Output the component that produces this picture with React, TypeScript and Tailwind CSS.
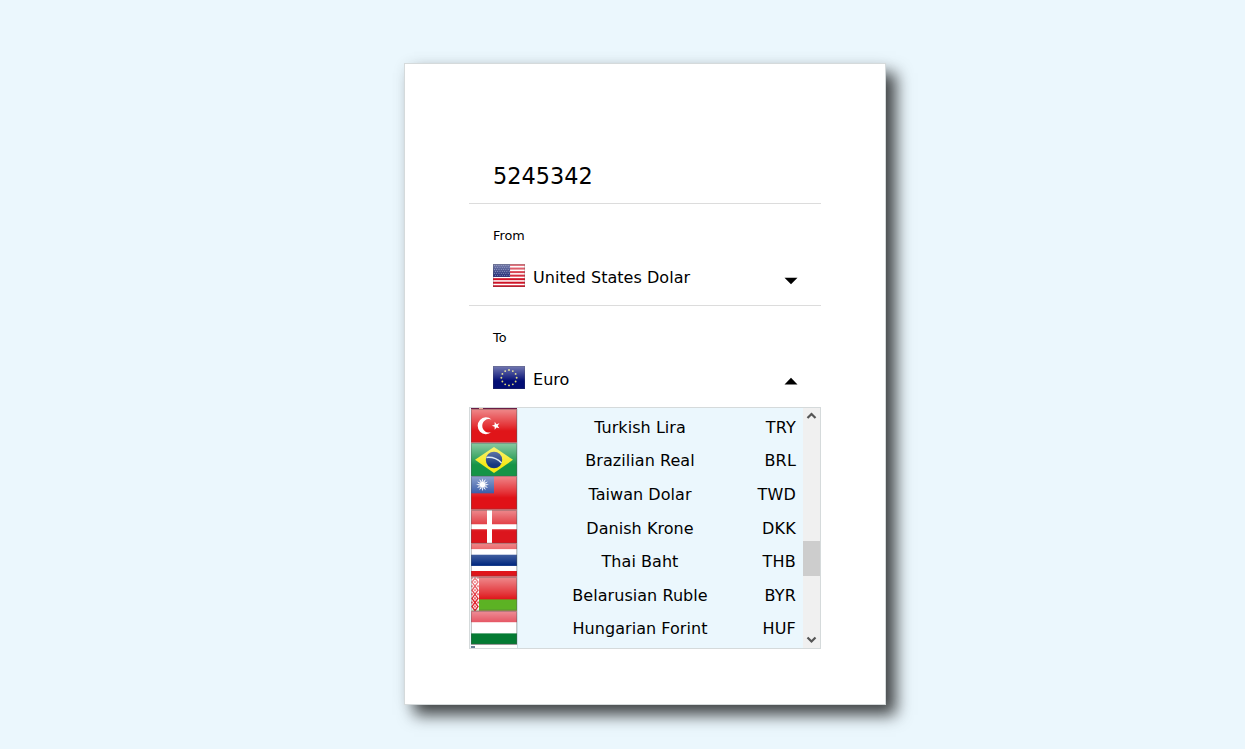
import type { ReactNode } from "react";

type FlagProps = { children: ReactNode; id: string; className: string; gloss?: number };

function Flag({ children, id, className, gloss = 0.5 }: FlagProps) {
  return (
    <svg viewBox="0 0 46 33" preserveAspectRatio="none" className={className}>
      <defs>
        <linearGradient id={id} x1="0" y1="0" x2="0" y2="1">
          <stop offset="0" stopColor="#fff" stopOpacity={gloss} />
          <stop offset="0.5" stopColor="#fff" stopOpacity={gloss * 0.26} />
          <stop offset="0.65" stopColor="#fff" stopOpacity="0" />
        </linearGradient>
      </defs>
      {children}
      <rect width="46" height="33" fill={`url(#${id})`} />
      <rect x="0.5" y="0.5" width="45" height="32" fill="none" stroke="#555" strokeOpacity="0.35" />
    </svg>
  );
}

const ring = Array.from({ length: 12 }, (_, i) => (i * Math.PI) / 6);

function star(cx: number, cy: number, outer: number, inner: number, n: number, turn: number) {
  return Array.from({ length: n * 2 }, (_, i) => {
    const r = i % 2 ? inner : outer;
    const a = turn + (i * Math.PI) / n;
    return `${(cx + r * Math.cos(a)).toFixed(2)},${(cy + r * Math.sin(a)).toFixed(2)}`;
  }).join(" ");
}

const usa = (
  <>
    <rect width="46" height="33" fill="#fff" />
    {[0, 1, 2, 3, 4, 5, 6].map((i) => (
      <rect key={i} y={i * 5.08} width="46" height="2.9" fill="#cf1427" />
    ))}
    <rect width="24.5" height="18.5" fill="#101c6c" />
    {[0, 1, 2, 3, 4, 5].map((r) =>
      [0, 1, 2, 3, 4, 5, 6].map((c) => (
        <circle key={`${r}-${c}`} cx={2 + c * 3.3 + (r % 2) * 1.5} cy={2 + r * 2.9} r="0.65" fill="#a9b0d6" />
      )),
    )}
  </>
);

const europe = (
  <>
    <rect width="46" height="33" fill="#020d74" />
    {ring.map((a) => (
      <circle key={a} cx={23 + 11 * Math.cos(a)} cy={16.8 + 11 * Math.sin(a)} r="1.35" fill="#e2dc79" />
    ))}
  </>
);

const turkey = (
  <>
    <rect width="46" height="33" fill="#e01519" />
    <path d="M20.5 10.3A8.3 8.3 0 1 0 20.5 22.7A6.7 6.7 0 1 1 20.5 10.3Z" fill="#fff" />
    <polygon points={star(25, 16.5, 4.2, 1.7, 5, Math.PI)} fill="#fff" />
  </>
);

const brazil = (
  <>
    <rect width="46" height="33" fill="#159447" />
    <path d="M4 16.5L23 4L42 16.5L23 29.5Z" fill="#f6e918" />
    <circle cx="23" cy="16.7" r="8.2" fill="#16377f" />
    <path d="M15.4 14.2Q24 13.2 30.6 19.6" fill="none" stroke="#dce9f2" strokeWidth="1.4" />
  </>
);

const taiwan = (
  <>
    <rect width="46" height="33" fill="#e01117" />
    <rect width="23" height="17" fill="#20479e" />
    <polygon points={star(11.5, 8.5, 6.4, 3.1, 12, 0)} fill="#fff" />
    <circle cx="11.5" cy="8.5" r="3.3" fill="#fff" stroke="#5b78b9" strokeWidth="0.6" />
  </>
);

const denmark = (
  <>
    <rect width="46" height="33" fill="#dc151d" />
    <path d="M16 0h5v14h25v5H21v14h-5V19H0v-5h16z" fill="#fff" />
  </>
);

const thailand = (
  <>
    <rect width="46" height="33" fill="#fff" />
    <rect width="46" height="6" fill="#df151b" />
    <rect y="11.5" width="46" height="11" fill="#032a80" />
    <rect y="27.5" width="46" height="5.5" fill="#df151b" />
  </>
);

const belarus = (
  <>
    <rect width="46" height="33" fill="#df171c" />
    <rect y="22" width="46" height="11" fill="#5cb224" />
    <rect width="8" height="33" fill="#fff" />
    {[0, 1, 2, 3].map((i) => (
      <path
        key={i}
        d={`M4 ${i * 8 + 1}l3 4-3 4-3-4zM1 ${i * 8}v2M7 ${i * 8}v2M4 ${i * 8 + 4}v2`}
        fill="none"
        stroke="#df2630"
        strokeWidth="1.4"
      />
    ))}
  </>
);

const hungary = (
  <>
    <rect width="46" height="33" fill="#fff" />
    <rect width="46" height="11" fill="#dd1e30" />
    <rect y="22" width="46" height="11" fill="#047b33" />
  </>
);

const currencies = [
  { name: "Turkish Lira", code: "TRY", flag: turkey },
  { name: "Brazilian Real", code: "BRL", flag: brazil },
  { name: "Taiwan Dolar", code: "TWD", flag: taiwan },
  { name: "Danish Krone", code: "DKK", flag: denmark },
  { name: "Thai Baht", code: "THB", flag: thailand },
  { name: "Belarusian Ruble", code: "BYR", flag: belarus },
  { name: "Hungarian Forint", code: "HUF", flag: hungary },
];

function Picker({ label, name, flag, id, open }: { label: string; name: string; flag: ReactNode; id: string; open?: boolean }) {
  return (
    <section className={`h-[102px] pl-6 pr-6 pt-[22px] ${open ? "" : "border-b border-[#dcdcdc]"}`}>
      <div className="h-5 text-[12.8px] leading-5">{label}</div>
      <div className="mt-[18px] flex h-6 items-center">
        <Flag id={id} className="mb-0.5 h-[23px] w-8 shrink-0" gloss={0.45}>{flag}</Flag>
        <span className="ml-2 grow pt-[3px] text-base leading-6 tracking-[0.04px]">{name}</span>
        <svg viewBox="0 0 14 8" className={`-mr-px h-2 w-3.5 ${open ? "mt-1.5" : "mt-2.5"}`}>
          <path d={open ? "M0.5 7.5L7 0.8L13.5 7.5Z" : "M0.5 0.7L7 7.2L13.5 0.7Z"} />
        </svg>
      </div>
    </section>
  );
}

function ScrollArrow({ down }: { down?: boolean }) {
  return (
    <svg viewBox="0 0 17 17" className="h-[17px] w-[17px] shrink-0">
      <path d={down ? "M4.5 6.5L8.5 10.5L12.5 6.5" : "M4.5 10L8.5 6L12.5 10"} fill="none" stroke="#555" strokeWidth="2.2" />
    </svg>
  );
}

export default function App() {
  return (
    <main className="flex h-[749px] justify-center overflow-hidden bg-[#ebf7fd] pl-[45px] pt-[63px] font-['DejaVu_Sans',sans-serif] text-black">
      <div className="h-[642px] w-[482px] border border-[#d5dadb] bg-white px-16 pt-[84px] shadow-[10px_10px_15px_rgba(0,0,0,0.72),0_0_15px_rgba(0,0,0,0.05)]">
        <div className="h-14 border-b border-[#dcdcdc] pl-6 pt-3 text-[22.4px] leading-[32px]">5245342</div>
        <Picker id="gloss-from" label="From" name="United States Dolar" flag={usa} />
        <Picker id="gloss-to" label="To" name="Euro" flag={europe} open />
        <div className="-mt-px flex h-[242px] border border-[#d5dadb] bg-[#ebf7fd]">
          <div className="flex min-w-0 grow flex-col overflow-hidden">
            <div className="ml-px flex h-px w-[46px] shrink-0 bg-[#6b1c44]">
              <div className="ml-2 w-1 bg-[#e9b09a]" />
            </div>
            {currencies.map(({ name, code, flag }) => (
              <div key={code} className="flex h-[33.6px] shrink-0 items-center text-base">
                <div className="flex h-full w-12 shrink-0 border-r border-[#cbdfe6] pl-px">
                  <Flag id={`gloss-${code}`} className="h-full w-full">{flag}</Flag>
                </div>
                <div className="ml-[39px] w-[166px] whitespace-nowrap pt-1 text-center leading-6 tracking-[0.05px]">{name}</div>
                <div className="ml-auto mr-[7px] pt-1 leading-6 tracking-[0.2px]">{code}</div>
              </div>
            ))}
            <div className="flex w-12 grow border-r border-[#cbdfe6] pl-px">
              <div className="grow border-t border-[#999] bg-white pt-px">
                <div className="h-0.5 w-1 bg-[#6a7f95]" />
              </div>
            </div>
          </div>
          <div className="flex w-[17px] shrink-0 flex-col bg-[#f0f0f0]">
            <ScrollArrow />
            <div className="flex grow flex-col pt-[116px]">
              <div className="h-[35px] bg-[#cdcdcd]" />
            </div>
            <ScrollArrow down />
          </div>
        </div>
      </div>
    </main>
  );
}
